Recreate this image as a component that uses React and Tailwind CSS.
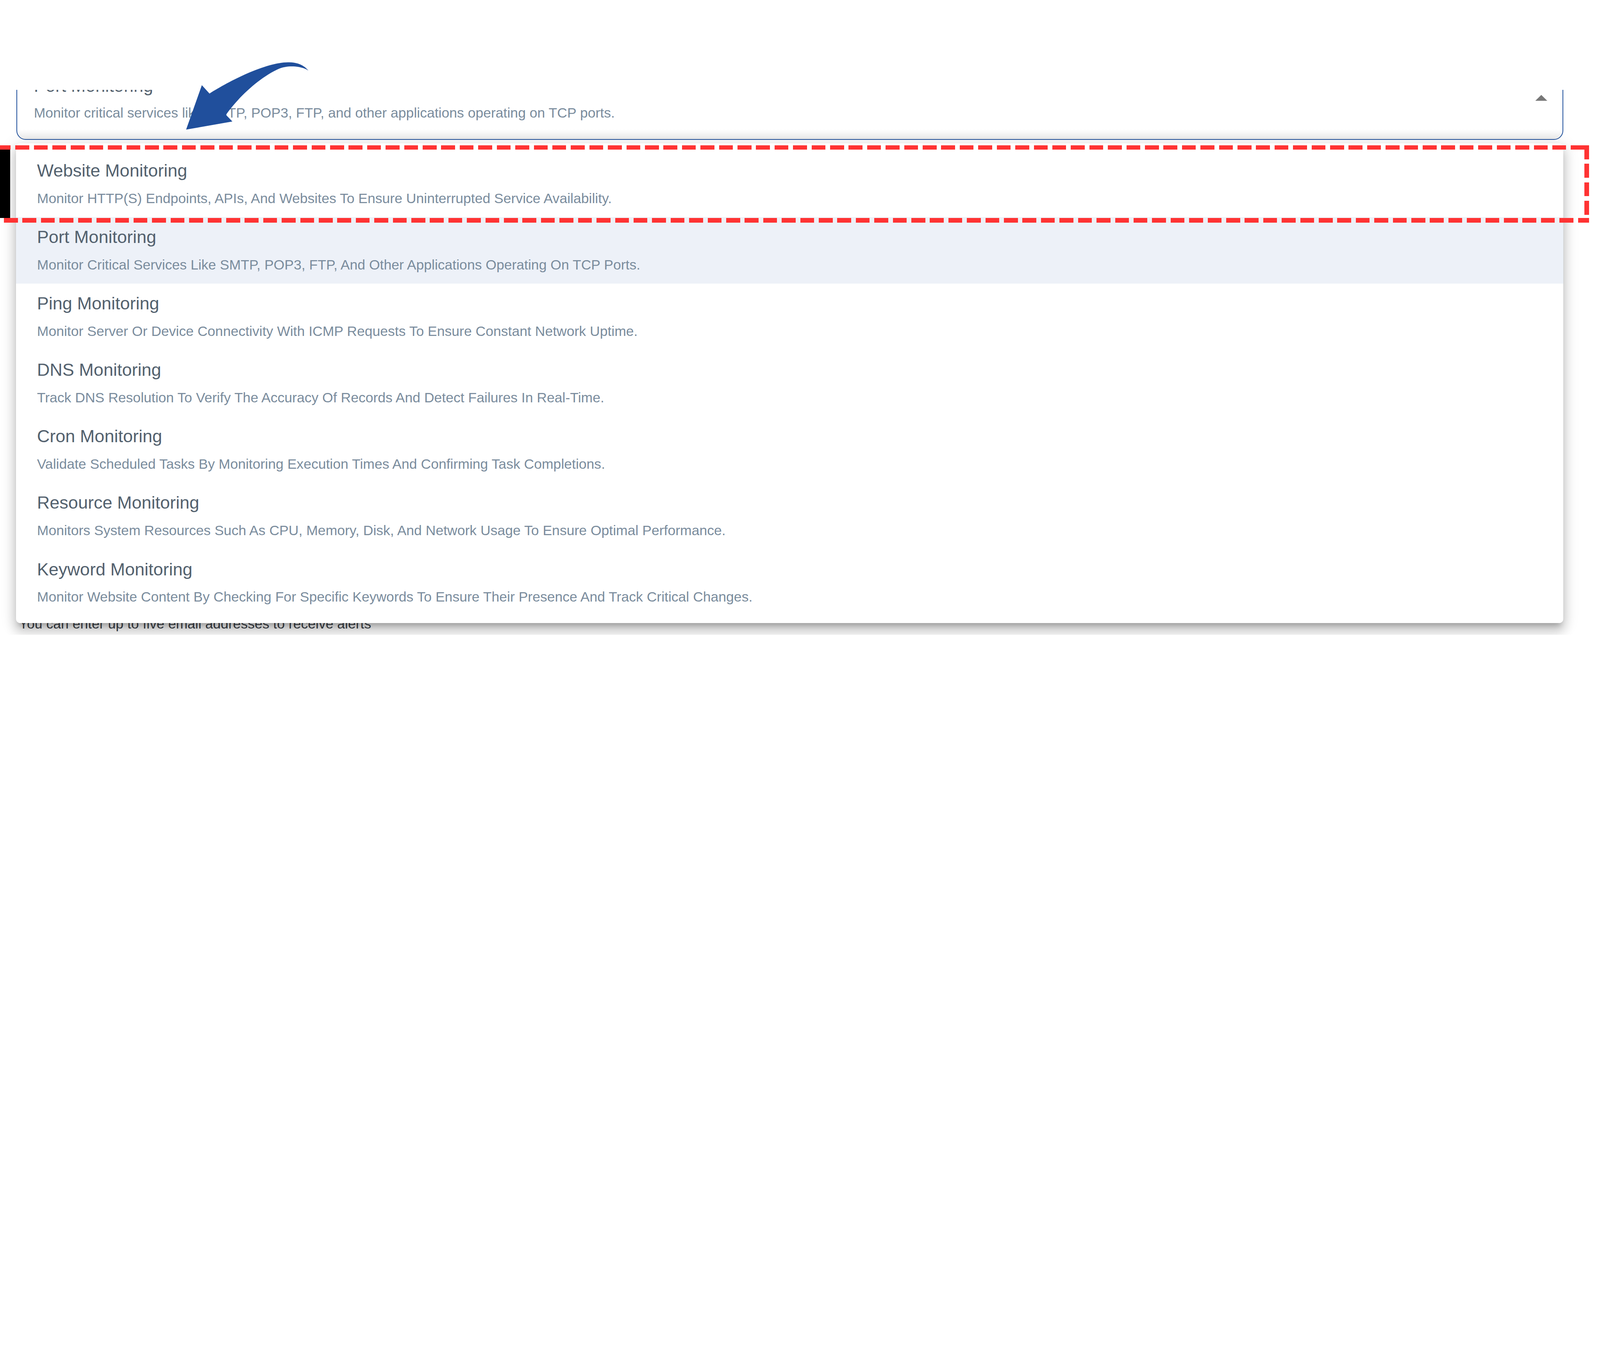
import React from "react"

// sizes are written in screenshot pixels and scaled with --u (one 6912th of the viewport width)

const options = [
  ["Website Monitoring", "Monitor HTTP(S) Endpoints, APIs, And Websites To Ensure Uninterrupted Service Availability."],
  ["Port Monitoring", "Monitor Critical Services Like SMTP, POP3, FTP, And Other Applications Operating On TCP Ports."],
  ["Ping Monitoring", "Monitor Server Or Device Connectivity With ICMP Requests To Ensure Constant Network Uptime."],
  ["DNS Monitoring", "Track DNS Resolution To Verify The Accuracy Of Records And Detect Failures In Real-Time."],
  ["Cron Monitoring", "Validate Scheduled Tasks By Monitoring Execution Times And Confirming Task Completions."],
  [
    "Resource Monitoring",
    "Monitors System Resources Such As CPU, Memory, Disk, And Network Usage To Ensure Optimal Performance.",
  ],
  [
    "Keyword Monitoring",
    "Monitor Website Content By Checking For Specific Keywords To Ensure Their Presence And Track Critical Changes.",
  ],
]

const selected = 1

const App = () => {
  return (
    <div className="relative flex h-[calc(var(--u)*3456)] w-full flex-col overflow-hidden bg-white pt-[calc(var(--u)*388)] font-['Liberation_Sans',Arial,sans-serif] [--u:calc(100vw/6912)]">
      {/* cropped screenshot area */}
      <div className="h-[calc(var(--u)*2355)] overflow-hidden">
        <div className="relative mt-[calc(var(--u)*-147)] flex flex-col pl-[calc(var(--u)*71)] pr-[calc(var(--u)*158)]">
          {/* select field */}
          <div className="flex items-center rounded-[calc(var(--u)*40)] border-[length:calc(var(--u)*5)] border-[#1f4f9c] bg-[linear-gradient(to_bottom,#ffffff_88%,#ececec)] pl-[calc(var(--u)*72)] pt-[calc(var(--u)*71)] pb-[calc(var(--u)*70)]">
            <div className="flex flex-1 flex-col">
              <p className="text-[length:calc(var(--u)*76)] leading-[calc(var(--u)*112)] text-[#53616e]">Port Monitoring</p>
              <p className="mt-[calc(var(--u)*19)] text-[length:calc(var(--u)*60)] leading-[calc(var(--u)*84)] text-[#7a8c9d]">
                Monitor critical services like SMTP, POP3, FTP, and other applications operating on TCP ports.
              </p>
            </div>
            <svg className="mr-[calc(var(--u)*66)] h-[calc(var(--u)*26)] w-[calc(var(--u)*53)]" viewBox="0 0 53 26">
              <polygon points="0,26 26.5,0 53,26" fill="#787878" />
            </svg>
          </div>

          <p className="mt-[calc(var(--u)*2051)] pl-[calc(var(--u)*11)] text-[length:calc(var(--u)*60)] leading-[calc(var(--u)*84)] text-[#3b4148]">
            You can enter up to five email addresses to receive alerts
          </p>

          {/* dropdown menu */}
          <ul className="absolute left-[calc(var(--u)*70)] top-[calc(var(--u)*378)] z-10 flex w-[calc(var(--u)*6684)] flex-col rounded-[calc(var(--u)*18)] bg-white py-[calc(var(--u)*32)] shadow-[0_calc(var(--u)*22)_calc(var(--u)*22)_calc(var(--u)*-13)_rgba(0,0,0,0.2),0_calc(var(--u)*35)_calc(var(--u)*44)_calc(var(--u)*5)_rgba(0,0,0,0.14),0_calc(var(--u)*13)_calc(var(--u)*62)_calc(var(--u)*10)_rgba(0,0,0,0.12)]">
            {options.map(([title, desc], i) => (
              <li
                key={title}
                className={
                  i === selected
                    ? "flex flex-col bg-[#edf1f8] px-[calc(var(--u)*90)] pt-[calc(var(--u)*31)] pb-[calc(var(--u)*38)]"
                    : "flex flex-col px-[calc(var(--u)*90)] pt-[calc(var(--u)*31)] pb-[calc(var(--u)*38)]"
                }
              >
                <p className="text-[length:calc(var(--u)*76)] leading-[calc(var(--u)*112)] text-[#53616e]">{title}</p>
                <p className="mt-[calc(var(--u)*22)] text-[length:calc(var(--u)*60)] leading-[calc(var(--u)*84)] text-[#7a8c9d]">
                  {desc}
                </p>
              </li>
            ))}
          </ul>
        </div>
      </div>

      {/* annotations drawn over the screenshot */}
      <svg className="absolute left-0 top-0 z-20 h-[calc(var(--u)*600)] w-[calc(var(--u)*1400)]" viewBox="0 0 1400 600">
        <path
          d="M872,368 L905,404 C990,350 1150,268 1246,269 C1285,268 1315,283 1332,305 C1310,288 1250,278 1205,297 C1120,335 1030,420 976,496 L1004,525 L804,560 Z"
          fill="#204f9c"
        />
      </svg>
      <div className="absolute left-0 top-[calc(var(--u)*647)] z-20 h-[calc(var(--u)*295)] w-[calc(var(--u)*44)] bg-black" />
      <div className="absolute left-0 top-[calc(var(--u)*627)] z-30 h-[calc(var(--u)*20)] w-[calc(var(--u)*6864)] bg-[repeating-linear-gradient(90deg,#ff3333_0_calc(var(--u)*46),transparent_calc(var(--u)*46)_calc(var(--u)*66),#ff3333_calc(var(--u)*66)_calc(var(--u)*80))]" />
      <div className="absolute left-0 top-[calc(var(--u)*942)] z-30 h-[calc(var(--u)*20)] w-[calc(var(--u)*6864)] bg-[repeating-linear-gradient(90deg,transparent_0_calc(var(--u)*17),#ff3333_calc(var(--u)*17)_calc(var(--u)*77),transparent_calc(var(--u)*77)_calc(var(--u)*80))]" />
      <div className="absolute left-[calc(var(--u)*6844)] top-[calc(var(--u)*627)] z-30 h-[calc(var(--u)*335)] w-[calc(var(--u)*20)] bg-[repeating-linear-gradient(180deg,#ff3333_0_calc(var(--u)*60),transparent_calc(var(--u)*60)_calc(var(--u)*80))]" />
    </div>
  )
}

export default App
